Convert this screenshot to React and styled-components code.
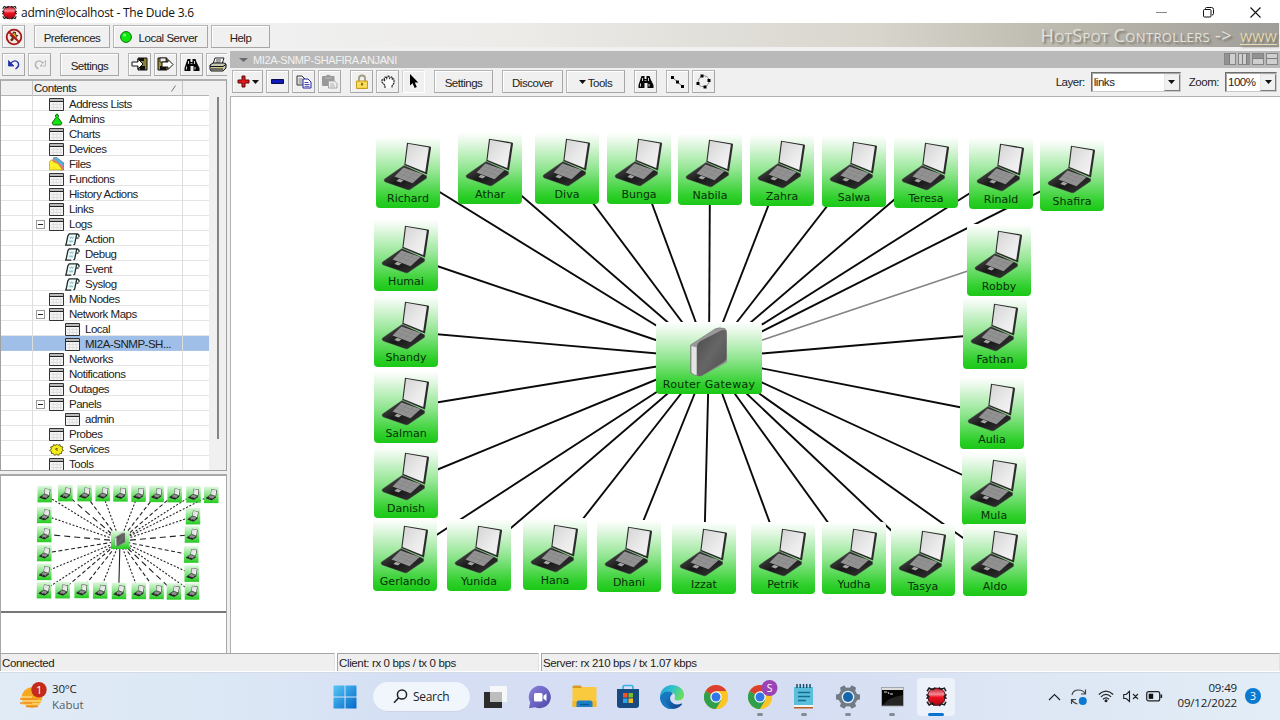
import React from "react";
import styled, { createGlobalStyle, css } from "styled-components";

const Global = createGlobalStyle`
  *, *::before, *::after { box-sizing: border-box; }
  html, body { margin: 0; padding: 0; overflow: hidden; }
  body { background: #f0f0f0; color: #222; font-family: "Liberation Sans", Arial, sans-serif; }
  svg { display: block; flex: none; }
`;

const line = "#b4b4b4";

const Desktop = styled.div`
  width: 1280px;
  height: 720px;
  display: flex;
  flex-direction: column;
  font-size: 11.5px;
  letter-spacing: -0.48px;
  line-height: 15px;
  white-space: nowrap;
  overflow: hidden;
`;

/* ---------- window title ---------- */
const TitleBar = styled.header`
  height: 23px;
  flex: none;
  display: flex;
  align-items: center;
  padding: 1px 19px 0 2px;
  background: #fff;
  font-family: "Open Sans", "Noto Sans", sans-serif;
  font-size: 12px;
  letter-spacing: -0.26px;
  color: #111;
`;
const TitleText = styled.span`
  margin-left: 4px;
  flex: 1;
`;
const WindowButtons = styled.div`
  display: flex;
  align-items: center;
  gap: 36px;
`;

/* ---------- shared controls ---------- */
const Button = styled.button`
  width: ${(p) => p.$w}px;
  height: 23px;
  flex: none;
  margin: 0 0 0 ${(p) => p.$gap ?? 3}px;
  padding: 3px 0 0;
  display: flex;
  align-items: center;
  justify-content: center;
  gap: ${(p) => p.$inner ?? 0}px;
  border: 1px solid ${line};
  border-color: ${(p) => (p.$pressed ? "#dcdcdc #fff #fff #cfcfcf" : "#b6b6b6 #a6a6a6 #a6a6a6 #b6b6b6")};
  box-shadow: inset 1px 1px 0 #fff;
  background: #f0f0f0;
  color: #222;
  font: inherit;
  letter-spacing: inherit;
  ${(p) => p.$icon && css`padding: 0;`}
`;

const TopBar = styled.div`
  height: 27px;
  flex: none;
  display: flex;
  align-items: flex-start;
  padding-top: 2px;
  background: #f0f0f0;
`;
const Banner = styled.div`
  flex: 1;
  height: 24px;
  margin: -2px 1px 0 1px;
  padding: 0 2px 0 0;
  display: flex;
  align-items: center;
  justify-content: flex-end;
  gap: 8px;
  background: linear-gradient(90deg, #f0f0f0 0%, #ecebe8 25%, #d8d5cd 60%, #bcb9ae 78%, #a09e99 100%);
  color: #e4e2dc;
  font-family: "Open Sans", "Noto Sans", sans-serif;
  font-variant: small-caps;
  font-size: 18px;
  letter-spacing: 0.36px;
  text-shadow: 2px 2px 2px #77746c;
`;
const BannerLink = styled.span`
  color: #e8dcb0;
  text-decoration: underline;
  text-underline-offset: 2px;
  text-decoration-thickness: 1px;
`;

const Work = styled.div`
  flex: 1;
  min-height: 0;
  display: flex;
`;

/* ---------- left side ---------- */
const Sidebar = styled.aside`
  width: 227px;
  flex: none;
  display: flex;
  flex-direction: column;
  overflow: hidden;
`;
const SideTools = styled.div`
  height: 29px;
  flex: none;
  display: flex;
  padding: 3px 0 0 2px;
`;
const Tree = styled.div`
  height: 392px;
  flex: none;
  display: flex;
  border: 1px solid #a0a0a0;
  border-top-width: 2px;
  border-top-color: #b0b0b0;
  background: #fff;
  overflow: hidden;
`;
const TreeTable = styled.div`
  width: 208px;
  flex: none;
`;
const TreeLine = styled.div`
  height: 15px;
  display: grid;
  grid-template-columns: 32px 150px 26px;
  background: ${(p) => (p.$selected ? "#9fbfe8" : "#fff")};
  border-bottom: 1px solid ${(p) => (p.$selected ? "#a9c4e6" : "#e4e4e4")};
`;
const TreeHeader = styled(TreeLine)`
  background: #f0f0f0;
  border-color: ${line};
`;
const Cell = styled.div`
  display: flex;
  align-items: center;
  border-right: 1px solid ${(p) => (p.$last ? "transparent" : p.$head ? "#c4c4c4" : "#dedede")};
  padding-left: ${(p) => p.$pad ?? 0}px;
  min-width: 0;
`;
const HeadCell = styled(Cell)`
  justify-content: space-between;
  padding: 0 6px 0 1px;
`;
const Expander = styled.span`
  width: 9px;
  height: 9px;
  margin-right: 4px;
  border: 1px solid #9a9a9a;
  display: flex;
  align-items: center;
  justify-content: center;
  visibility: ${(p) => (p.$on ? "visible" : "hidden")};
  &::after {
    content: "";
    width: 5px;
    height: 1px;
    background: #222;
  }
`;
const ItemText = styled.span`
  margin-left: 5px;
  padding-top: 1px;
`;
const ScrollTrack = styled.div`
  flex: 1;
  background: #f0f0f0;
  padding: 16px 0 0 8px;
`;
const ScrollThumb = styled.div`
  width: 2px;
  height: 342px;
  background: #858585;
`;
const Preview = styled.div`
  flex: 1;
  margin-top: 3px;
  border: 1px solid #a8a8a8;
  border-top-width: 2px;
  border-bottom: 0;
  background: #fff;
`;

/* ---------- map side ---------- */
const MapPane = styled.main`
  flex: 1;
  margin-left: 3px;
  display: flex;
  flex-direction: column;
  min-width: 0;
`;
const MapTitle = styled.div`
  height: 17px;
  margin-top: 1px;
  flex: none;
  display: flex;
  align-items: center;
  padding: 0 2px 0 9px;
  background: #b9b9b9;
  color: #f2f2f2;
  letter-spacing: -0.4px;
  font-size: 11px;
`;
const MapTitleText = styled.span`
  flex: 1;
  margin-left: 5px;
  padding-top: 1px;
`;
const MapTools = styled.div`
  height: 28px;
  flex: none;
  display: flex;
  align-items: flex-start;
  padding: 2px 3px 0 2px;
`;
const Filters = styled.div`
  flex: 1;
  height: 24px;
  display: flex;
  align-items: center;
  justify-content: flex-end;
`;
const Select = styled.div`
  width: ${(p) => p.$w}px;
  height: 20px;
  margin: 0 ${(p) => p.$right ?? 0}px 0 ${(p) => p.$left}px;
  display: flex;
  align-items: center;
  justify-content: space-between;
  padding-left: 2px;
  background: #fff;
  border: 1px solid;
  border-color: #6e6e6e #c9c9c9 #c9c9c9 #6e6e6e;
  box-shadow: inset 1px 1px 0 #a8a8a8;
`;
const SelectArrow = styled.span`
  width: 16px;
  height: 17px;
  display: flex;
  align-items: center;
  justify-content: center;
  background: #f0f0f0;
  border: 1px solid;
  border-color: #e6e6e6 #7c7c7c #7c7c7c #e6e6e6;
`;
const Canvas = styled.div`
  flex: 1;
  position: relative;
  border-top: 1px solid #b0b0b0;
  border-left: 1px solid #b0b0b0;
  background: #fff;
  overflow: hidden;
`;
const Node = styled.div`
  position: absolute;
  width: ${(p) => p.$w}px;
  height: 72px;
  display: flex;
  flex-direction: column;
  align-items: center;
  border-radius: 4px;
  background: linear-gradient(180deg, #fff 0%, #e9f9e9 12%, #93e693 50%, #2ecf2a 88%, #1bc817 100%);
`;
const NodeLabel = styled.span`
  margin-top: -8px;
  font: 11px/14px "DejaVu Sans", sans-serif;
  letter-spacing: ${(p) => (p.$wide ? 0.28 : 0)}px;
  color: #07300a;
`;

/* ---------- status ---------- */
const Status = styled.footer`
  height: 19px;
  flex: none;
  display: flex;
  gap: 2px;
  background: #fff;
`;
const StatusCell = styled.div`
  ${(p) => (p.$w ? `width: ${p.$w}px` : "flex: 1")};
  height: 18px;
  padding: 2px 0 0 1px;
  border-top: 1px solid #a6a6a6;
  border-left: 1px solid #a6a6a6;
  border-right: 1px solid #e2e2e2;
  background: #efefef;
  letter-spacing: -0.36px;
`;

/* ---------- taskbar ---------- */
const Taskbar = styled.nav`
  height: 48px;
  flex: none;
  display: flex;
  align-items: center;
  background: linear-gradient(90deg, #e0ebf6 0%, #dce7f5 18%, #d5dff4 32%, #d5ddf3 62%, #dce6f4 78%, #e2edf7 100%);
  border-top: 1px solid #d4dbe6;
  font-family: "Open Sans", "Noto Sans", sans-serif;
  color: #222;
  letter-spacing: -0.2px;
`;
const Weather = styled.div`
  width: 323px;
  display: flex;
  align-items: center;
  padding-left: 18px;
  gap: 5px;
  font-size: 11.5px;
  line-height: 16px;
`;
const Muted = styled.div`
  color: #585d66;
  letter-spacing: 0;
`;
const Slot = styled.div`
  width: 44px;
  height: 46px;
  flex: none;
  display: flex;
  align-items: center;
  justify-content: center;
  position: relative;
`;
const ActiveSlot = styled(Slot)`
  width: 38px;
  height: 38px;
  margin: 0 3px;
  border-radius: 4px;
  background: #edf1fa;
`;
const Running = styled.i`
  position: absolute;
  bottom: ${(p) => (p.$active ? 0 : 4)}px;
  width: ${(p) => (p.$active ? 16 : 6)}px;
  height: 3px;
  border-radius: 2px;
  background: ${(p) => (p.$active ? "#0a74d1" : "#858a94")};
`;
const SearchPill = styled.div`
  width: 97px;
  height: 30px;
  margin: 0 4px 0 6px;
  border-radius: 15px;
  background: #f1f5fc;
  border-bottom: 1px solid #ccd4e6;
  display: flex;
  align-items: center;
  padding-left: 20px;
  gap: 5px;
  font-size: 12px;
  letter-spacing: -0.3px;
`;
const Tray = styled.div`
  margin-left: auto;
  display: flex;
  align-items: center;
  padding-right: 19px;
`;
const TrayIcon = styled.div`
  width: ${(p) => p.$w}px;
  display: flex;
  justify-content: center;
`;
const Clock = styled.div`
  width: 69px;
  padding: 0 1px 3px 0;
  text-align: right;
  font-size: 11.5px;
  line-height: 15px;
  letter-spacing: -0.15px;
`;
const Count = styled.div`
  width: 16px;
  height: 16px;
  margin: 0 0 2px 7px;
  border-radius: 50%;
  background: #0b79d0;
  color: #fff;
  font-size: 10.5px;
  line-height: 16px;
  text-align: center;
`;

/* ---------- icons ---------- */
const Svg = ({ w, h, vb, children, ...rest }) => (
  <svg width={w} height={h} viewBox={vb || `0 0 ${w} ${h}`} {...rest}>{children}</svg>
);

const DudeIcon = ({ size }) => (
  <Svg w={size} h={size} vb="0 0 20 20">
    <defs>
      <linearGradient id="dude" x1="0" y1="0" x2="0" y2="1">
        <stop offset="0" stopColor="#c01028" /><stop offset=".36" stopColor="#f68c94" />
        <stop offset=".52" stopColor="#f21020" /><stop offset="1" stopColor="#a00a14" />
      </linearGradient>
    </defs>
    <path d="M5 3Q10 1 15 3Q19 6 18 11Q18 15 15 17Q10 20 5 17Q2 15 2 11Q1 6 5 3z" fill="url(#dude)" stroke="#4a0a10" strokeWidth=".9" />
    <path d="M1 5l2-3 3 1.500 3-1.800M19 5l-1.500-3-3 1L12 1.500M1 15l2 3 3-1.500 2 2M19 15l-1.500 3-3-1-2 2M.5 8l2 2-2 2M19.500 8l-2 2 2 2" fill="none" stroke="#1c1c1c" strokeWidth="1.500" />
  </Svg>
);
const NoIcon = () => (
  <Svg w={18} h={18}>
    <circle cx="9" cy="9" r="7.300" fill="#f7e9e4" stroke="#a51616" strokeWidth="1.800" />
    <path d="M8 3.500l3 .5v2.500l2.500 1-2 1.500v3l-2.500-1-2 2.500-2-1.500 2-2.500-2.500-2 2.500-1z" fill="#5b3018" />
    <path d="M7 6l3-1 1 4-2 2z" fill="#d9b63a" />
    <path d="M4 4l10 10" stroke="#b51515" strokeWidth="1.800" />
  </Svg>
);
const Ball = () => (
  <Svg w={12} h={12} style={{ margin: "-2px 2px 0 -4px" }}><circle cx="6" cy="6" r="5.400" fill="#0be80b" stroke="#076b07" /><circle cx="4.500" cy="4" r="1.600" fill="#7dff7d" /></Svg>
);
const Undo = ({ redo }) => (
  <Svg w={14} h={12} style={redo ? { transform: "scaleX(-1)" } : undefined}>
    <path d="M4 4Q8 0 11 3.500Q13 7 8.500 10" fill="none" stroke={redo ? "#b0b0b0" : "#2333a5"} strokeWidth="1.400" />
    <path d="M1.500 1.500v5.500h5.500z" fill={redo ? "#efefef" : "#2333a5"} stroke={redo ? "#b0b0b0" : "#2333a5"} strokeWidth=".8" />
  </Svg>
);
const ImportIcon = () => (
  <Svg w={17} h={15}>
    <path d="M7 1h9v12H7z" fill="#8c8434" stroke="#111" />
    <path d="M8 1h5v3H8zM9 9h5v4H9z" fill="#111" />
    <path d="M1 5h6V2l5 5-5 5V9H1z" fill="#fff" stroke="#111" />
  </Svg>
);
const ExportIcon = () => (
  <Svg w={17} h={15}>
    <path d="M1 1h9v12H1z" fill="#a09636" stroke="#111" />
    <path d="M3 1h6v4H3z" fill="#eee" stroke="#111" strokeWidth=".8" />
    <path d="M3 9h6v4H3z" fill="#111" />
    <path d="M5 5h6V2.500l5 5-5 5V10H5z" fill="#fff" stroke="#111" />
  </Svg>
);
const Binoculars = () => (
  <Svg w={16} h={14}>
    <path d="M4 1h3v3h2V1h3l1 3 3 6v3h-6V8H7v5H1v-3l2-6z" fill="#080808" transform="translate(-.5 0)" />
    <path d="M4.500 3v3M2.500 8.500v3M10.500 3v3M11 9v2.500" stroke="#e8e8e8" strokeWidth=".9" />
    <path d="M6.500 5.500h2" stroke="#999" />
  </Svg>
);
const Printer = () => (
  <Svg w={18} h={16}>
    <path d="M6 1h9l-2 6H4z" fill="#fff" stroke="#222" />
    <path d="M7 3h5M6.500 5h5" stroke="#444" />
    <path d="M1 8l3-2h11l2 1v4l-3 3H2l-1-2z" fill="#c9c9b4" stroke="#111" />
    <path d="M1 9.500h13l3-2M2 12h12" stroke="#111" fill="none" />
    <path d="M9 10.700h3" stroke="#d8cf2c" />
  </Svg>
);
const TableIcon = () => (
  <Svg w={15} h={13}>
    <path d="M.5.500h14v12H.5z" fill="#f3f3f3" stroke="#333" />
    <path d="M1 1h13v2.200H1z" fill="#b9b9b9" />
    <path d="M1 3.500h13" stroke="#222" />
    <path d="M4.500 5v7M8 5v7M11.500 5v7M2 6.500h11M2 9.500h11" stroke="#dadada" strokeWidth=".8" />
  </Svg>
);
const ScriptIcon = () => (
  <Svg w={15} h={13} vb="0 0 16 14">
    <path d="M4 1.500h10.500l-1 4h-2L10 12.500H1.500L4 4z" fill="#f3fbfb" />
    <path d="M15 4.500V2.500L13.500 1H4.500L3 3 1.500 10.500.7 13h6M12.500 1.500L10.300 12 9 13M12.500 5.500h2" fill="none" stroke="#1d2c2c" strokeWidth="1.400" />
    <path d="M5 4l1 2 1-2 1 2 1-2M4.500 8l1 2 1-2 1 2 1-2" fill="none" stroke="#77bcc6" strokeWidth=".9" />
  </Svg>
);
const AdminIcon = () => (
  <Svg w={15} h={13}>
    <path d="M8 1q1.800.5 1.500 2.500L9 4.500l4 5.500q-.5 2-2.500 2h-5q-2 0-2.500-2l4-5.500-.5-1Q6 1.500 8 1z" fill="#12e212" stroke="#0b5a0b" strokeWidth=".9" />
  </Svg>
);
const FilesIcon = () => (
  <Svg w={15} h={14}>
    <path d="M4 1l3-1 8 6v7h-4z" fill="#4fb4dc" stroke="#557" strokeWidth=".5" />
    <path d="M2 3l3-1 9 7v4h-5z" fill="#e8797f" />
    <path d="M.5 4.500l2-1.500 2.500 2 4 1.500 4.500 6.500H.5z" fill="#fff028" stroke="#9a9020" strokeWidth=".6" />
  </Svg>
);
const ServiceIcon = () => (
  <Svg w={15} h={13}>
    <path d="M7.500 1l1.500 1.500L11 1.500l.5 2 2.500.5-1 2 1.500 1.500-2 1 .2 2-2.200.2-1 1.600-2-1-2 1-1-1.600-2.200-.2.200-2-2-1L2.500 6l-1-2 2.500-.5.500-2 2 1z" fill="#f6ee1c" stroke="#5c5708" strokeWidth=".9" />
    <path d="M6 6.500l2-1.500v3" stroke="#5c5708" fill="none" />
  </Svg>
);
const treeIcons = { table: TableIcon, script: ScriptIcon, admin: AdminIcon, files: FilesIcon, service: ServiceIcon };

const DownArrow = ({ w = 7, color = "#111", lift = 0 }) => (
  <Svg w={w} h={4} vb="0 0 7 4" preserveAspectRatio="none" style={{ marginTop: -lift }}><path d="M0 0h7L3.500 4z" fill={color} /></Svg>
);
const Plus = () => (
  <Svg w={13} h={13}><path d="M5 1h3v4h4v3H8v4H5V8H1V5h4z" fill="#e01818" stroke="#5d0a0a" /></Svg>
);
const Minus = () => (
  <Svg w={13} h={5}><path d="M.5.500h12v4H.5z" fill="#0f1ab4" stroke="#080c50" /></Svg>
);
const Copy = () => (
  <Svg w={16} h={14}>
    <path d="M1 1h5l2.500 2.500V10H1z" fill="#f4f4f4" stroke="#333" />
    <path d="M2.500 4h4M2.500 6h4M2.500 8h4" stroke="#555" strokeWidth=".8" />
    <path d="M7 4h5l3 3v6H7z" fill="#fff" stroke="#20209c" />
    <path d="M8.500 7.500h4M8.500 9.500h5M8.500 11.300h5" stroke="#20209c" strokeWidth=".8" />
  </Svg>
);
const Paste = () => (
  <Svg w={17} h={15}>
    <path d="M1 3q0-1 1-1h3q1-2 3.500-1 1 1 2 1h2q1 0 1 1v9H2q-1 0-1-1z" fill="#999" />
    <path d="M4 4h7" stroke="#bbb" />
    <path d="M7.500 7h6l2.500 2.500V14H7.500z" fill="#f0f0f0" stroke="#a5a5a5" />
    <path d="M9 10h4M9 12h5" stroke="#b0b0b0" />
  </Svg>
);
const Lock = () => (
  <Svg w={14} h={16}>
    <path d="M4 8V4Q4 1.500 7 1.500T10 4v4" fill="none" stroke="#a09b82" strokeWidth="1.800" />
    <path d="M1.500 7h11v7.500h-11z" fill="#f8d445" stroke="#c79c22" />
    <path d="M2 9.500h10M2 12h10" stroke="#fbe88a" strokeWidth=".8" />
    <path d="M7 9v2.500" stroke="#6b5310" strokeWidth="1.600" />
  </Svg>
);
const Hand = () => (
  <Svg w={14} h={14}>
    <path d="M4 13v-2.500L1 7V5q1-1 2 0l1 1-.8-2.500Q3.500 1.500 5 2.300l.7 1.200L6.200 1.500q1.300-1 1.900.3l.4 1.500L9.500 2q1.500-.5 1.600 1l.1 1.200q1.600-.9 1.800.6V8l-2 3v2" fill="#fff" stroke="#222" strokeWidth="1.100" strokeDasharray="2.200 .5" />
  </Svg>
);
const Pointer = () => (
  <Svg w={10} h={15}><path d="M1 0v11.500l2.600-2.300 2 4.800 2.200-1-2-4.600H9.300z" fill="#000" /></Svg>
);
const LinkLine = () => (
  <Svg w={15} h={14}>
    <path d="M2 2l11 10" stroke="#444" strokeWidth=".8" />
    <path d="M1 1h3v3H1zM6 5.500h3v3H6zM11 10h3v3h-3z" fill="#000" />
  </Svg>
);
const LinkRing = () => (
  <Svg w={15} h={15}>
    <path d="M6 2Q12 1 13 6Q14 11 8.500 12.500Q2 13 2 8.500Q2 4 6 2z" fill="none" stroke="#777" strokeWidth=".8" />
    <path d="M4.500.500h3v3h-3zM11.500 5h3v3h-3zM7.500 11.500h3v3h-3zM.5 8h3v3h-3z" fill="#000" />
  </Svg>
);
const SplitIcons = () => (
  <Svg w={54} h={13}>
    {[0, 14, 28, 42].map((x) => (
      <rect key={x} x={x + 0.5} y=".5" width="11" height="11" fill="#cfcfcf" stroke="#858585" />
    ))}
    <path d="M1 1h4v10H1zM22 1h4v10h-4zM29 1h10v4H29z" fill="#929292" />
    <path d="M5.500 1v10M18.500 1v10M22.500 1v10M29 5.500h10M43 5.500h10" stroke="#7c7c7c" />
  </Svg>
);

/* ---------- map graphics ---------- */
const MapDefs = () => (
  <Svg w={0} h={0} style={{ position: "absolute" }}>
    <defs>
      <linearGradient id="base" x1="0" y1="0" x2="1" y2="1">
        <stop offset="0" stopColor="#5a5a5a" /><stop offset=".5" stopColor="#181818" /><stop offset="1" stopColor="#3a3a3a" />
      </linearGradient>
      <linearGradient id="glass" x1="0" y1="0" x2="1" y2="1">
        <stop offset="0" stopColor="#d4d4d4" /><stop offset=".6" stopColor="#ebebeb" /><stop offset="1" stopColor="#f4f4f4" />
      </linearGradient>
      <linearGradient id="tile" x1="0" y1="0" x2="0" y2="1">
        <stop offset="0" stopColor="#dff8df" /><stop offset=".45" stopColor="#8fe58f" /><stop offset="1" stopColor="#22cb1e" />
      </linearGradient>
      <linearGradient id="boxside" x1="0" y1="0" x2="1" y2="1">
        <stop offset="0" stopColor="#4b4b4b" /><stop offset=".5" stopColor="#666" /><stop offset="1" stopColor="#4d4d4d" />
      </linearGradient>
      <symbol id="laptop" viewBox="0 0 64 64">
        <path d="M8.300 43.200L28 29.500 50.500 39.800V42.300L34 53.500Q33 54.200 31 53.500L9.500 46Q7.500 45.200 8.300 43.200z" fill="url(#base)" stroke="#3a3a3a" strokeWidth=".4" />
        <path d="M27.500 31.500L46.700 38 36.500 47.200 18.500 40.500z" fill="#929292" />
        <path d="M25 34l18.500 6.500M22 37l17.500 6.500M24 42.500l9-8.500M30 44.500l9-8.500" stroke="#808080" strokeWidth=".5" />
        <path d="M23 42.800l4.500 1.500-2.700 2.200-4.500-1.500z" fill="#a6a6a6" />
        <path d="M31 6.700L54 10.400Q55.300 10.800 55 12L51 38.500 28.300 29z" fill="#2c2c2c" />
        <path d="M32 7.800L52.900 11.600 49.200 35.900 29.500 28z" fill="url(#glass)" />
      </symbol>
      <symbol id="router" viewBox="0 0 64 64">
        <path d="M13.500 23L38 7Q41 5 48 6.500L49.500 9V40L24 54Q14 53 13.500 50z" fill="#999" stroke="#777" strokeWidth=".6" />
        <path d="M14.500 24L19.500 25.500V53Q14.500 52 14.500 49z" fill="#e4e4e4" />
        <path d="M20 25Q20 21 23.500 19L45 8Q49.500 6.500 49.500 11V36Q49.500 38.500 47 40L25 53.500Q20 56 20 51z" fill="url(#boxside)" />
      </symbol>
    </defs>
  </Svg>
);

/* Device centre (x) and tile centre (y) in window coordinates. */
const devices = [
  ["Richard", 408, 172], ["Athar", 490, 168], ["Diva", 567, 168], ["Bunga", 639, 168], ["Nabila", 710, 169],
  ["Zahra", 782, 170], ["Salwa", 854, 171], ["Teresa", 926, 172], ["Rinald", 1001, 173], ["Shafira", 1072, 175],
  ["Humai", 406, 255], ["Robby", 999, 260], ["Shandy", 406, 331], ["Fathan", 995, 333],
  ["Salman", 406, 407], ["Aulia", 992, 413], ["Danish", 406, 482], ["Mula", 994, 489],
  ["Gerlando", 405, 555], ["Yunida", 479, 555], ["Hana", 555, 554], ["Dhani", 629, 556],
  ["Izzat", 704, 558], ["Petrik", 783, 558], ["Yudha", 854, 558], ["Tasya", 923, 560], ["Aldo", 995, 560],
];
const hub = { x: 709, y: 358 };
const origin = { x: 231, y: 97 };

const NetworkMap = () => (
  <Canvas>
    <Svg w={1049} h={556} vb={`${origin.x} ${origin.y} 1049 556`}>
      {devices.map(([name, x, y]) => (
        <line key={name} x1={x} y1={y + 0.5} x2={hub.x} y2={hub.y}
          stroke={name === "Robby" ? "#858585" : "#0a0a0a"} strokeWidth={name === "Robby" ? 1.6 : 1.9} />
      ))}
    </Svg>
    {devices.map(([name, x, y]) => (
      <Node key={name} $w={64} style={{ left: x - 32 - origin.x, top: y - 36 - origin.y }}>
        <Svg w={64} h={64}><use href="#laptop" width="64" height="64" /></Svg>
        <NodeLabel>{name}</NodeLabel>
      </Node>
    ))}
    <Node $w={106} style={{ left: hub.x - 53 - origin.x, top: hub.y - 36 - origin.y }}>
      <Svg w={64} h={64}><use href="#router" width="64" height="64" /></Svg>
      <NodeLabel $wide>Router Gateway</NodeLabel>
    </Node>
  </Canvas>
);

const miniX = (x) => 44.5 + (x - 408) * 0.2508;
const miniY = (y) => 494.5 + (y - 172.5) * 0.2508;
const dashFor = (name) => {
  if (name === "Izzat") return undefined;
  if (["Shandy", "Fathan", "Athar", "Tasya"].includes(name)) return "6 4";
  if (["Diva", "Teresa", "Salman", "Aulia", "Yunida", "Hana", "Yudha", "Salwa"].includes(name)) return "4 2.5";
  return "2 1.7";
};
const MiniMap = () => (
  <Svg w={225} h={177} vb="1 476 225 177">
    {devices.filter(([name]) => name !== "Nabila").map(([name, x, y]) => (
      <line key={name} x1={miniX(hub.x)} y1={miniY(hub.y)} x2={miniX(x)} y2={miniY(y)} stroke="#222" strokeWidth="1.100"
        strokeDasharray={dashFor(name)} />
    ))}
    {devices.map(([name, x, y]) => (
      <g key={name} transform={`translate(${miniX(x) - 7} ${miniY(y) - 8.5})`}>
        <rect width="14.500" height="16.500" fill="url(#tile)" />
        <use href="#laptop" width="15" height="15" y="1" />
      </g>
    ))}
    <rect x="111" y="531" width="18.500" height="18" fill="url(#tile)" />
    <use href="#router" x="111" y="531" width="18" height="18" />
    <path d="M1 612h225" stroke="#4a4a4a" strokeWidth="1.300" />
  </Svg>
);

const treeItems = [
  ["Address Lists", "table"], ["Admins", "admin"], ["Charts", "table"], ["Devices", "table"], ["Files", "files"],
  ["Functions", "table"], ["History Actions", "table"], ["Links", "table"], ["Logs", "table", 0, true],
  ["Action", "script", 1], ["Debug", "script", 1], ["Event", "script", 1], ["Syslog", "script", 1],
  ["Mib Nodes", "table"], ["Network Maps", "table", 0, true], ["Local", "table", 1], ["MI2A-SNMP-SH...", "table", 1],
  ["Networks", "table"], ["Notifications", "table"], ["Outages", "table"], ["Panels", "table", 0, true],
  ["admin", "table", 1], ["Probes", "table"], ["Services", "service"], ["Tools", "table"],
];

const TreeRow = ({ item: [text, icon, depth = 0, open] }) => {
  const Icon = treeIcons[icon];
  return (
    <TreeLine $selected={text.startsWith("MI2A")}>
      <Cell />
      <Cell $pad={3 + depth * 16}>
        <Expander $on={open} />
        <Icon />
        <ItemText>{text}</ItemText>
      </Cell>
      <Cell $last />
    </TreeLine>
  );
};

/* ---------- taskbar icons ---------- */
const WeatherIcon = () => (
  <Svg w={29} h={29}>
    <circle cx="14" cy="15.500" r="10.300" fill="#f5a921" />
    <path d="M5 19h19M3 22h19M4 15h10" stroke="#fbd678" strokeWidth="1.600" />
    <path d="M2 17h18M2 21h12M8 24.500h12" stroke="#ef8d22" strokeWidth="1.300" />
    <circle cx="21" cy="7.700" r="7.700" fill="#c42b1c" />
    <text x="21" y="11.500" textAnchor="middle" fontSize="11" fill="#fff">1</text>
  </Svg>
);
const StartIcon = () => (
  <Svg w={24} h={24}>
    <defs><linearGradient id="win" x1="0" y1="0" x2="1" y2="1"><stop offset="0" stopColor="#55c8f5" /><stop offset="1" stopColor="#0567c9" /></linearGradient></defs>
    <path d="M1 .5h10.500V11.500H.5V1zM12.500.500h10.500q.5 0 .5.500v10.500h-11zM.5 12.500h11v11H1q-.5 0-.5-.5zM12.500 12.500h11V23q0 .5-.5.500h-10.500z" fill="url(#win)" />
  </Svg>
);
const SearchIcon = () => (
  <Svg w={15} h={15}><circle cx="9" cy="5.500" r="4.600" fill="none" stroke="#222" strokeWidth="1.500" /><path d="M5.500 9l-4.500 4.800" stroke="#222" strokeWidth="1.600" /></Svg>
);
const TaskViewIcon = () => (
  <Svg w={26} h={26} style={{ marginLeft: -2 }}>
    <path d="M2 8h18v16H2z" fill="#2c2c2c" />
    <path d="M8 2h17v16H8z" fill="#f8f8f8" opacity=".95" />
    <path d="M8 8h12v10H8z" fill="#bdbdbd" />
  </Svg>
);
const ChatIcon = () => (
  <Svg w={24} h={24}>
    <defs><linearGradient id="chat" x1="0" y1="0" x2="1" y2="1"><stop offset="0" stopColor="#8d83dc" /><stop offset="1" stopColor="#4b46a8" /></linearGradient></defs>
    <path d="M12 .8A11.200 11.200 0 1 1 7 22.200L1 23.300 2.200 17.500A11.200 11.200 0 0 1 12 .8z" fill="url(#chat)" />
    <rect x="6" y="8" width="8.500" height="8.500" rx="1.500" fill="#fff" />
    <path d="M15.500 10.800l3-2.300v7.500l-3-2.300z" fill="#fff" />
  </Svg>
);
const FolderIcon = () => (
  <Svg w={25} h={23}>
    <path d="M.5 2Q.5.500 2 .5h6.500l2 2.500H.5z" fill="#d99a1c" />
    <path d="M.5 3H9l1.500-1H24.500V22H.5z" fill="#f9c93e" />
    <path d="M.5 16h24v6H.5z" fill="#f5b72c" />
    <path d="M4.500 22v-4q0-2.500 2.500-2.500h11q2.500 0 2.500 2.500v4z" fill="#1c80c8" />
    <path d="M8 19.500h9" stroke="#0b5591" strokeWidth="1.300" />
  </Svg>
);
const StoreIcon = () => (
  <Svg w={25} h={26}>
    <path d="M7 5V3q0-1.500 1.500-1.500h7Q17 1.500 17 3v2" fill="none" stroke="#36b4e8" strokeWidth="1.700" />
    <path d="M1 5h22v16q0 3-3 3H4q-3 0-3-3z" fill="#164a80" />
    <path d="M7 9h4.500v4.500H7z" fill="#f0512a" /><path d="M12.500 9H17v4.500h-4.500z" fill="#7fba25" />
    <path d="M7 14.500h4.500V19H7z" fill="#24a5ee" /><path d="M12.500 14.500H17V19h-4.500z" fill="#fcba1f" />
  </Svg>
);
const EdgeIcon = () => (
  <Svg w={26} h={26}>
    <defs>
      <linearGradient id="e1" x1="0" y1="0" x2="1" y2=".4"><stop offset="0" stopColor="#2596d8" /><stop offset=".5" stopColor="#2fc0cf" /><stop offset="1" stopColor="#67dc63" /></linearGradient>
      <linearGradient id="e2" x1="0" y1="0" x2="1" y2="1"><stop offset="0" stopColor="#1b8bd8" /><stop offset="1" stopColor="#103f86" /></linearGradient>
    </defs>
    <path d="M1 13A12 12 0 0 1 13 1Q24 1.500 25 10.500 25 16.500 18.500 16.500 14.500 16.300 16 13.500 17 9.500 12 8 5 7 1 13z" fill="url(#e1)" />
    <path d="M1 13Q4 7 10.500 7.500 14.500 8.500 13.500 10 9.500 13 12 17.500 15.500 22 22.500 19.500 24 19 22.500 21 19 25 13 25A12 12 0 0 1 1 13z" fill="url(#e2)" />
    <path d="M9 8Q4.500 13 7.500 19 10 24 15 24.800 8 26 3.500 20.500-.5 14 3 10.500 6 7 9 8z" fill="#1577c2" />
  </Svg>
);
const ChromeShape = () => (
  <>
    <circle cx="12" cy="12" r="12" fill="#fbc526" />
    <path d="M12 12L1.600 6A12 12 0 0 1 22.400 6z" fill="#dc3e30" />
    <path d="M12 12L1.600 6A12 12 0 0 0 12 24l5.500-9z" fill="#2f9f4d" />
    <path d="M12 6h10.400A12 12 0 0 1 12 24l5.500-9z" fill="#fbc526" />
    <circle cx="12" cy="12" r="5.700" fill="#fff" />
    <circle cx="12" cy="12" r="4.500" fill="#3377e6" />
  </>
);
const ChromeIcon = () => <Svg w={24} h={24}><ChromeShape /></Svg>;
const ChromeBadgeIcon = () => (
  <Svg w={30} h={30} style={{ transform: "translate(3px,-3px)" }}>
    <g transform="translate(0 6)"><ChromeShape /></g>
    <circle cx="21.500" cy="9" r="8" fill="#9b43b5" />
    <text x="21.500" y="12.700" textAnchor="middle" fontSize="10.500" fill="#fff">S</text>
  </Svg>
);
const NotepadIcon = () => (
  <Svg w={22} h={25}>
    <path d="M1 3h19v19H1z" fill="#59bfdb" />
    <path d="M1 21h19v2H1z" fill="#f4f4f4" /><path d="M1 23h19v1.500H1z" fill="#b95f25" />
    <path d="M4 0v4M7.200 0v4M10.500 0v4M13.700 0v4M17 0v4" stroke="#174e6b" strokeWidth="1.500" />
    <path d="M5 8.500h12M5 12.500h12M5 16.500h8" stroke="#176b91" strokeWidth="1.600" />
  </Svg>
);
const GearIcon = () => (
  <Svg w={26} h={26}>
    <g fill="#717b86">
      <circle cx="13" cy="13" r="9.500" />
      {[0, 60, 120, 180, 240, 300].map((a) => <path key={a} d="M10.500 1h5l1 6H9.500z" transform={`rotate(${a + 30} 13 13)`} />)}
    </g>
    <circle cx="13" cy="13" r="6.300" fill="#e9edf3" /><circle cx="13" cy="13" r="5" fill="#1766ad" />
  </Svg>
);
const CmdIcon = () => (
  <Svg w={23} h={20}>
    <path d="M.5.500h22v18.500H.5z" fill="#050505" stroke="#a4a7ad" />
    <path d="M1 1h21v2H1z" fill="#ddd" /><path d="M3 5h3M7 5l1 2M9 7h3" stroke="#ddd" />
    <path d="M2 18Q8 10 22 8v10z" fill="#252525" />
  </Svg>
);

const apps = [
  ["task", TaskViewIcon], ["chat", ChatIcon], ["files", FolderIcon], ["store", StoreIcon], ["edge", EdgeIcon], ["chrome", ChromeIcon],
  ["profile", ChromeBadgeIcon, true], ["notepad", NotepadIcon, true], ["settings", GearIcon, true], ["cmd", CmdIcon, true],
];

const TrayIcons = () => (
  <>
    <TrayIcon $w={24}><Svg w={13} h={8}><path d="M1 7l5.500-5.500L12 7" fill="none" stroke="#222" strokeWidth="1.200" /></Svg></TrayIcon>
    <TrayIcon $w={25}>
      <Svg w={18} h={18}>
        <path d="M2 7Q3 2 8.500 2 13 2 15 5.500M15.500 1.500v4.500h-4.500M1.500 16v-4.500h4.500M2 12Q4 15.500 7.500 16" fill="none" stroke="#444" strokeWidth="1.200" />
        <circle cx="12.800" cy="13" r="4" fill="#0b79d0" />
      </Svg>
    </TrayIcon>
    <TrayIcon $w={30}>
      <Svg w={16} h={13}>
        <path d="M.8 4.500Q8-2.200 15.200 4.500M2.900 6.900Q8 2 13.100 6.900M5 9.200Q8 6.500 11 9.200" fill="none" stroke="#222" strokeWidth="1.200" />
        <circle cx="8" cy="10.800" r="1.500" fill="#222" />
      </Svg>
    </TrayIcon>
    <TrayIcon $w={19}>
      <Svg w={16} h={13}><path d="M.7 4.500h2.500L6.500 1.300v10.200L3.200 8.500H.7zM10 4l5 5M15 4l-5 5" fill="none" stroke="#222" strokeWidth="1.100" /></Svg>
    </TrayIcon>
    <TrayIcon $w={29}>
      <Svg w={17} h={11}>
        <rect x=".7" y=".7" width="13" height="9.200" rx="2" fill="none" stroke="#222" strokeWidth="1.200" />
        <path d="M2.700 2.700h4.500v5.200H2.700z" fill="#111" /><path d="M15.300 3.500v3.500" stroke="#222" strokeWidth="1.700" />
      </Svg>
    </TrayIcon>
  </>
);

export default function App() {
  return (
    <Desktop>
      <Global />
      <MapDefs />
      <TitleBar>
        <DudeIcon size={15} />
        <TitleText>admin@localhost - The Dude 3.6</TitleText>
        <WindowButtons>
          <Svg w={11} h={11}><path d="M0 5.500h11" stroke="#888" /></Svg>
          <Svg w={11} h={11}>
            <rect x=".5" y="2.500" width="7.500" height="7.500" rx="1" fill="none" stroke="#111" />
            <path d="M2.500 2.500V1.500q0-1 1-1h5q2 0 2 2v4q0 1.500-1.500 1.500" fill="none" stroke="#111" />
          </Svg>
          <Svg w={11} h={11}><path d="M.5.500l10 10M10.500.500l-10 10" stroke="#111" strokeWidth="1.100" /></Svg>
        </WindowButtons>
      </TitleBar>
      <TopBar>
        <Button $w={23} $gap={2} $icon><NoIcon /></Button>
        <Button $w={76} $gap={9}>Preferences</Button>
        <Button $w={95} $gap={3} $inner={5}><Ball />Local Server</Button>
        <Button $w={59} $gap={3}>Help</Button>
        <Banner><span>HotSpot Controllers -&gt;</span><BannerLink>www</BannerLink></Banner>
      </TopBar>
      <Work>
        <Sidebar>
          <SideTools>
            <Button $w={23} $gap={0} $icon><Undo /></Button>
            <Button $w={23} $icon><Undo redo /></Button>
            <Button $w={59} $gap={9}>Settings</Button>
            <Button $w={23} $gap={9} $icon><ImportIcon /></Button>
            <Button $w={23} $icon><ExportIcon /></Button>
            <Button $w={23} $icon><Binoculars /></Button>
            <Button $w={23} $icon><Printer /></Button>
          </SideTools>
          <Tree>
            <TreeTable>
              <TreeHeader>
                <Cell $head />
                <HeadCell $head>Contents<Svg w={5} h={7}><path d="M.5 6.500l4-6" stroke="#777" /></Svg></HeadCell>
                <Cell $last />
              </TreeHeader>
              {treeItems.map((item) => <TreeRow key={item[0]} item={item} />)}
            </TreeTable>
            <ScrollTrack><ScrollThumb /></ScrollTrack>
          </Tree>
          <Preview><MiniMap /></Preview>
        </Sidebar>
        <MapPane>
          <MapTitle>
            <DownArrow w={9} color="#6a6a6a" />
            <MapTitleText>MI2A-SNMP-SHAFIRA ANJANI</MapTitleText>
            <SplitIcons />
          </MapTitle>
          <MapTools>
            <Button $w={31} $gap={0} $inner={2} $icon><Plus /><DownArrow /></Button>
            <Button $w={23} $icon><Minus /></Button>
            <Button $w={23} $icon><Copy /></Button>
            <Button $w={23} $icon><Paste /></Button>
            <Button $w={23} $gap={9} $icon><Lock /></Button>
            <Button $w={23} $icon><Hand /></Button>
            <Button $w={23} $icon $pressed><Pointer /></Button>
            <Button $w={59} $gap={9}>Settings</Button>
            <Button $w={61} $gap={9}>Discover</Button>
            <Button $w={59} $inner={2}><DownArrow lift={3} />Tools</Button>
            <Button $w={23} $gap={9} $icon><Binoculars /></Button>
            <Button $w={23} $gap={9} $icon><LinkLine /></Button>
            <Button $w={23} $icon><LinkRing /></Button>
            <Filters>
              Layer:
              <Select $w={90} $left={6} $right={8}>links<SelectArrow><DownArrow /></SelectArrow></Select>
              Zoom:
              <Select $w={52} $left={6}>100%<SelectArrow><DownArrow /></SelectArrow></Select>
            </Filters>
          </MapTools>
          <NetworkMap />
        </MapPane>
      </Work>
      <Status>
        <StatusCell $w={335}>Connected</StatusCell>
        <StatusCell $w={202}>Client: rx 0 bps / tx 0 bps</StatusCell>
        <StatusCell>Server: rx 210 bps / tx 1.07 kbps</StatusCell>
      </Status>
      <Taskbar>
        <Weather>
          <WeatherIcon />
          <div>30°C<Muted>Kabut</Muted></div>
        </Weather>
        <Slot><StartIcon /></Slot>
        <SearchPill><SearchIcon />Search</SearchPill>
        {apps.map(([name, Icon, running]) => (
          <Slot key={name}><Icon />{running && <Running />}</Slot>
        ))}
        <ActiveSlot><DudeIcon size={21} /><Running $active /></ActiveSlot>
        <Tray>
          <TrayIcons />
          <Clock>09:49<br />09/12/2022</Clock>
          <Count>3</Count>
        </Tray>
      </Taskbar>
    </Desktop>
  );
}
